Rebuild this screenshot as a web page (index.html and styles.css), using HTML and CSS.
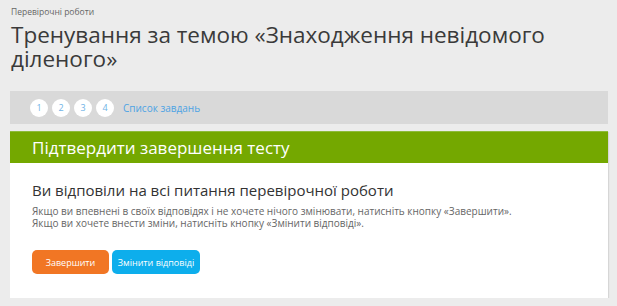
FILE: index.html
```html
<!DOCTYPE html>
<html lang="uk">
<head>
  <meta charset="UTF-8" />
  <meta name="viewport" content="width=device-width, initial-scale=1.0" />
  <title>Перевірочні роботи</title>
  <link rel="stylesheet" href="styles.css">
</head>
<body>
  <div class="page">
    <div class="breadcrumb">Перевірочні роботи</div>
    <h1 class="title">Тренування за темою «Знаходження невідомого діленого»</h1>

    <div class="tasks-bar">
      <span class="task-num">1</span>
      <span class="task-num">2</span>
      <span class="task-num">3</span>
      <span class="task-num">4</span>
      <a class="task-list" href="#">Список завдань</a>
    </div>

    <div class="panel">
      <div class="panel-head">Підтвердити завершення тесту</div>
      <div class="panel-body">
        <h2>Ви відповіли на всі питання перевірочної роботи</h2>
        <p>Якщо ви впевнені в своїх відповідях і не хочете нічого змінювати, натисніть кнопку «Завершити».<br>
        Якщо ви хочете внести зміни, натисніть кнопку «Змінити відповіді».</p>
        <div class="actions">
          <button class="btn btn-finish">Завершити</button>
          <button class="btn btn-change">Змінити відповіді</button>
        </div>
      </div>
    </div>
  </div>
</body>
</html>
```

FILE: styles.css
```css
:root {
  --bg: #ececec;
  --bar: #d9d9d9;
  --green: #74a800;
  --orange: #f17624;
  --blue: #0daeec;
  --text: #333;
  --muted: #666;
}

* {
  box-sizing: border-box;
  margin: 0;
  padding: 0;
}

body {
  font-family: 'Open Sans', 'Noto Sans', sans-serif;
  background-color: var(--bg);
  color: var(--text);
}

.page {
  padding: 4px 9px 0 10px;
}

.breadcrumb {
  font-size: 8.5px;
  line-height: 16px;
  color: var(--muted);
  padding-left: 1px;
}

.title {
  font-size: 22.5px;
  font-weight: 400;
  line-height: 24px;
  color: #3a3a3a;
  margin-top: 2.5px;
  padding-left: 1px;
}

.tasks-bar {
  background: var(--bar);
  height: 33px;
  margin-top: 20.5px;
  padding-left: 20px;
  display: flex;
  align-items: center;
  gap: 4px;
}

.task-num {
  width: 18px;
  height: 18px;
  border-radius: 50%;
  background: #fff;
  color: #6fb3e6;
  font-size: 9px;
  display: flex;
  align-items: center;
  justify-content: center;
}

.task-list {
  color: #4da3e4;
  font-size: 10px;
  text-decoration: none;
  margin-left: 5px;
}

.panel {
  background: #fff;
  margin-top: 7px;
  box-shadow: 1px 1px 1px #d6d6d6;
}

.panel-head {
  background: var(--green);
  color: #fff;
  font-size: 17px;
  height: 32px;
  line-height: 32px;
  padding-left: 22px;
  border-top: 1px solid #8dbb3a;
}

.panel-body {
  padding: 17px 22px 24px;
}

.panel-body h2 {
  font-size: 15px;
  font-weight: 400;
  line-height: 20px;
  color: var(--text);
}

.panel-body p {
  font-size: 10px;
  line-height: 12px;
  color: var(--muted);
  margin-top: 5px;
}

.actions {
  display: flex;
  gap: 3px;
  margin-top: 21px;
}

.btn {
  border: none;
  border-radius: 5px;
  color: #fff;
  font-family: inherit;
  font-size: 9px;
  height: 24px;
  cursor: pointer;
}

.btn-finish {
  background: var(--orange);
  width: 77px;
}

.btn-change {
  background: var(--blue);
  width: 88px;
}
```
